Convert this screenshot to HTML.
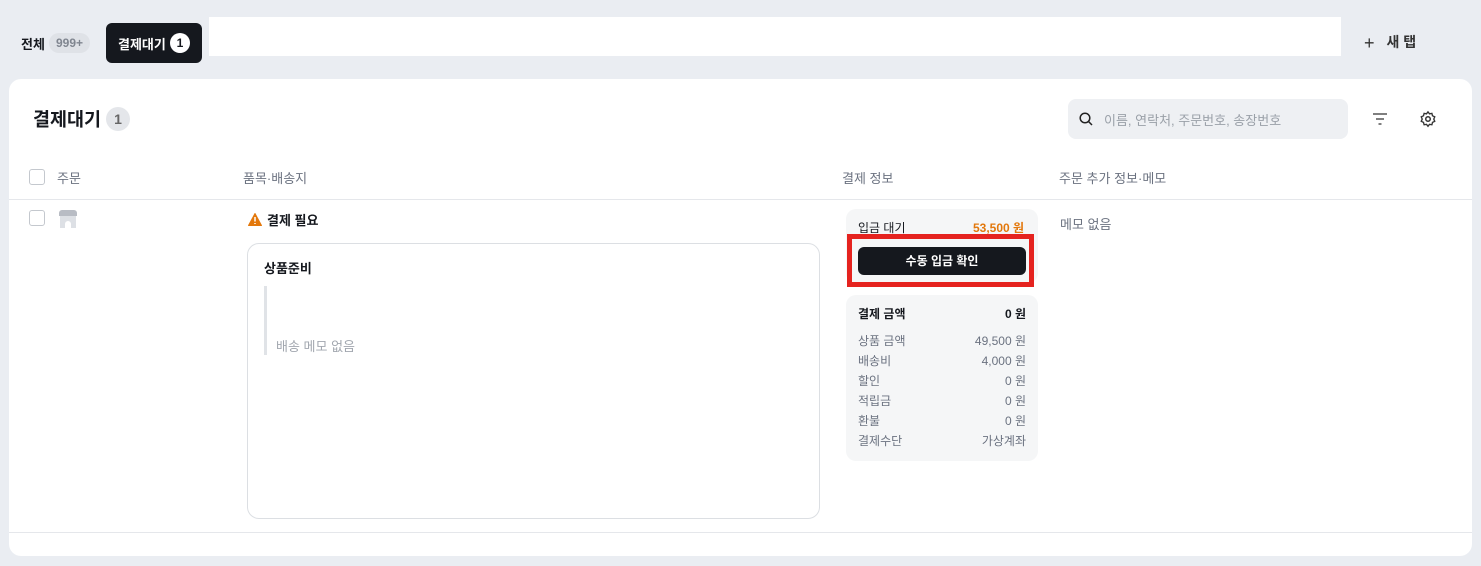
<!DOCTYPE html>
<html><head><meta charset="utf-8"><style>
*{margin:0;padding:0;box-sizing:border-box}
body{width:1481px;height:566px;background:#eaedf2;font-family:"Liberation Sans","Noto Sans CJK KR",sans-serif;position:relative;overflow:hidden;color:#15181e}
.a{position:absolute}
.fs13{font-size:13px}
.g{color:#6b7280}
</style></head><body>
<div class="a" style="left:21px;top:34px;font-size:13px;font-weight:700">전체</div>
<div class="a" style="left:49px;top:33px;width:41px;height:20px;border-radius:10px;background:#dfe2e7;color:#808690;font-size:12px;font-weight:700;text-align:center;line-height:20px">999+</div>
<div class="a" style="left:106px;top:23px;width:96px;height:40px;border-radius:6px;background:#15181e;color:#fff;font-size:13px;font-weight:700;padding:11px 0 0 12px">결제대기</div>
<div class="a" style="left:170px;top:33px;width:20px;height:20px;border-radius:50%;background:#fff;color:#15181e;font-size:12px;font-weight:700;text-align:center;line-height:20px">1</div>
<div class="a" style="left:209px;top:17px;width:1132px;height:39px;background:#fff"></div>
<div class="a" style="left:1364px;top:32px;font-size:14px;color:#333;font-weight:700"><span style="font-weight:400;font-size:18px;vertical-align:-2px;margin-right:12px">+</span>새 탭</div>
<div class="a" style="left:9px;top:79px;width:1463px;height:477px;background:#fff;border-radius:12px"></div>
<div class="a" style="left:33px;top:106px;font-size:18.5px;font-weight:700">결제대기</div>
<div class="a" style="left:106px;top:107px;width:24px;height:24px;border-radius:50%;background:#e4e6ea;color:#666;font-size:14px;font-weight:700;text-align:center;line-height:24px">1</div>
<div class="a" style="left:1068px;top:99px;width:280px;height:40px;border-radius:8px;background:#eef0f3"></div>
<svg class="a" style="left:1078px;top:111px" width="16" height="16" viewBox="0 0 16 16"><circle cx="7" cy="7" r="4.8" fill="none" stroke="#222" stroke-width="1.5"/><path d="M10.5 10.5L14 14" stroke="#222" stroke-width="1.5"/></svg>
<div class="a" style="left:1104px;top:110px;font-size:13px;color:#9aa0a8">이름, 연락처, 주문번호, 송장번호</div>
<svg class="a" style="left:1372px;top:112px" width="16" height="14"><path d="M1 2h14M4 7h8M6.5 12h3" stroke="#555" stroke-width="1.5"/></svg>
<svg class="a" style="left:1419px;top:110px" width="18" height="18" viewBox="0 0 24 24"><circle cx="12" cy="12" r="3" fill="none" stroke="#333" stroke-width="2"/><path d="M12 2.5l2 2.6 3.2-.6.8 3.2 3 1.4-1.3 3 1.3 3-3 1.4-.8 3.2-3.2-.6-2 2.6-2-2.6-3.2.6-.8-3.2-3-1.4 1.3-3-1.3-3 3-1.4.8-3.2 3.2.6z" fill="none" stroke="#333" stroke-width="1.8"/></svg>
<div class="a" style="left:29px;top:169px;width:16px;height:16px;border:1.5px solid #c4c8ce;border-radius:3px"></div>
<div class="a fs13 g" style="left:57px;top:168px">주문</div>
<div class="a fs13 g" style="left:243px;top:168px">품목·배송지</div>
<div class="a fs13 g" style="left:842px;top:168px">결제 정보</div>
<div class="a fs13 g" style="left:1059px;top:168px">주문 추가 정보·메모</div>
<div class="a" style="left:9px;top:199px;width:1463px;height:1px;background:#e5e7eb"></div>
<div class="a" style="left:29px;top:210px;width:16px;height:16px;border:1.5px solid #c4c8ce;border-radius:3px"></div>
<div class="a" style="left:59px;top:210px;width:18px;height:6px;background:#b8bcc4;border-radius:3px 3px 0 0"></div>
<div class="a" style="left:60px;top:216px;width:16px;height:12px;background:#dde0e5"></div>
<div class="a" style="left:65px;top:221px;width:6px;height:7px;background:#fff;border-radius:3px 3px 0 0"></div>
<svg class="a" style="left:248px;top:213px" width="14" height="13"><path d="M7 0.5L13.5 12.5H0.5Z" fill="#e3780c" stroke="#e3780c" stroke-linejoin="round"/><path d="M7 4v4.5M7 10v1" stroke="#fff" stroke-width="1.5"/></svg>
<div class="a" style="left:267px;top:210px;font-size:13px;font-weight:700">결제 필요</div>
<div class="a" style="left:247px;top:243px;width:573px;height:276px;border:1px solid #dcdfe3;border-radius:12px"></div>
<div class="a" style="left:264px;top:258px;font-size:13px;font-weight:700">상품준비</div>
<div class="a" style="left:264px;top:286px;width:3px;height:69px;background:#e0e3e7"></div>
<div class="a" style="left:276px;top:336px;font-size:13px;color:#a2a7af">배송 메모 없음</div>
<div class="a" style="left:846px;top:209px;width:192px;height:74px;background:#f5f6f7;border-radius:10px"></div>
<div class="a" style="left:858px;top:219px;font-size:12px">입금 대기</div>
<div class="a" style="left:973px;top:219px;font-size:12px;color:#e3780c;font-weight:700">53,500 원</div>
<div class="a" style="left:847px;top:234px;width:187px;height:53px;border:5px solid #e5231f"></div>
<div class="a" style="left:858px;top:247px;width:168px;height:28px;background:#15181e;border-radius:6px;color:#fff;font-size:12px;font-weight:700;text-align:center;line-height:28px">수동 입금 확인</div>
<div class="a" style="left:846px;top:295px;width:192px;height:166px;background:#f5f6f7;border-radius:10px"></div>
<div class="a" style="left:858px;top:305px;font-size:12px;font-weight:700">결제 금액</div>
<div class="a" style="left:858px;top:305px;width:168px;text-align:right;font-size:12px;font-weight:700">0 원</div>
<div class="a" style="left:858px;top:331px;width:168px;font-size:12px;color:#6b7280;line-height:20px">
<div style="display:flex;justify-content:space-between"><span>상품 금액</span><span>49,500 원</span></div>
<div style="display:flex;justify-content:space-between"><span>배송비</span><span>4,000 원</span></div>
<div style="display:flex;justify-content:space-between"><span>할인</span><span>0 원</span></div>
<div style="display:flex;justify-content:space-between"><span>적립금</span><span>0 원</span></div>
<div style="display:flex;justify-content:space-between"><span>환불</span><span>0 원</span></div>
<div style="display:flex;justify-content:space-between"><span>결제수단</span><span>가상계좌</span></div>
</div>
<div class="a fs13 g" style="left:1060px;top:214px">메모 없음</div>
<div class="a" style="left:9px;top:532px;width:1463px;height:1px;background:#e5e7eb"></div>
</body></html>
